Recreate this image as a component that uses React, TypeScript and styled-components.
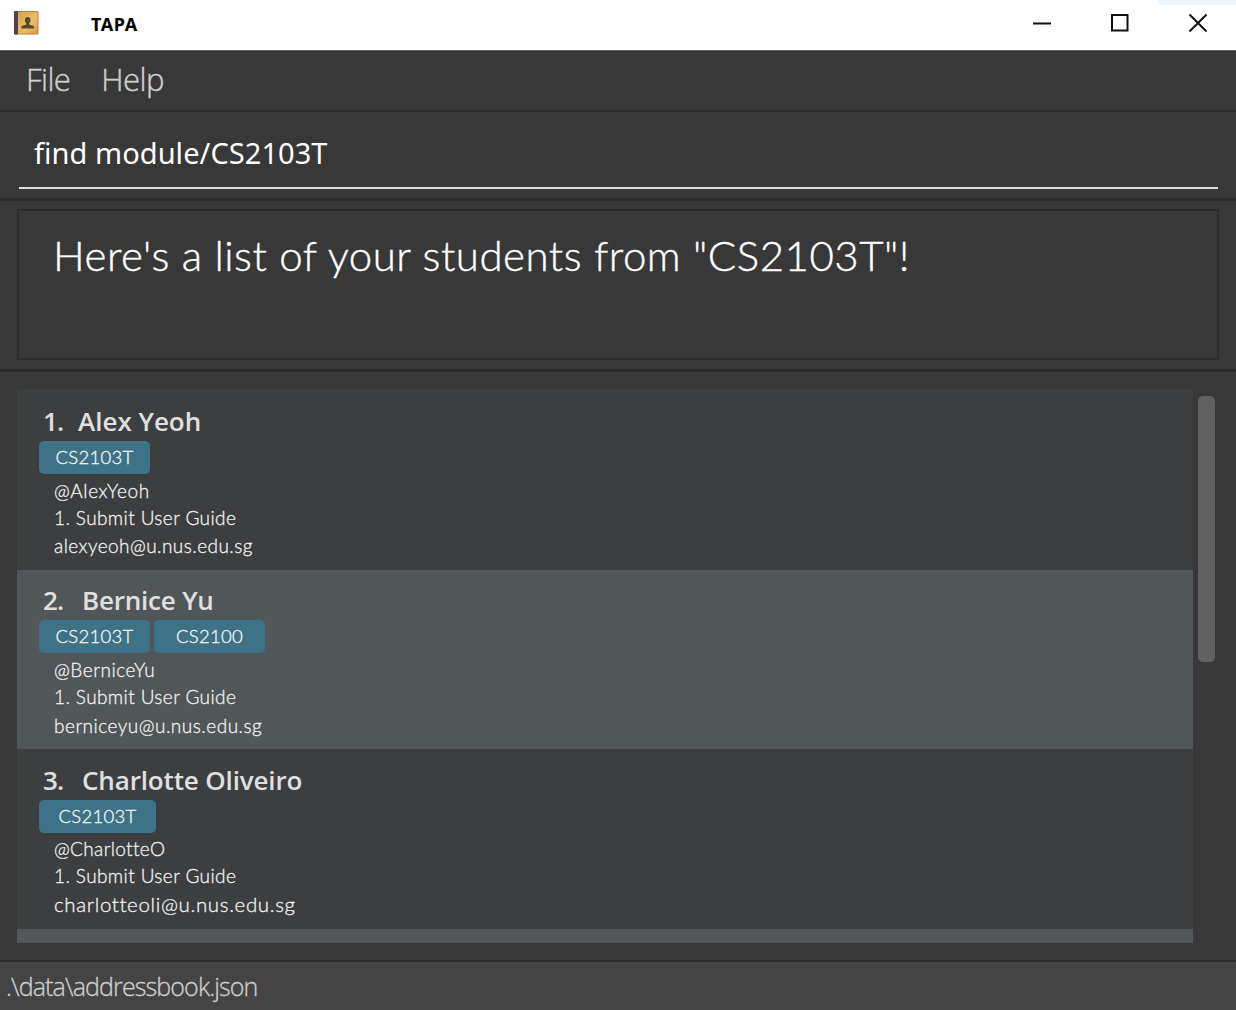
import React from "react";
import styled, { createGlobalStyle } from "styled-components";

const GlobalStyle = createGlobalStyle`
  * { box-sizing: border-box; }
  body { margin: 0; background: #383838; overflow: hidden; }
`;

const segoe = `"Open Sans", "Noto Sans", sans-serif`;
const avenir = `Lato, "Open Sans", sans-serif`;

const Window = styled.div`
  width: 1236px;
  height: 1010px;
  display: flex;
  flex-direction: column;
  background: #383838;
  overflow: hidden;
`;

const TitleBar = styled.header`
  height: 51px;
  flex: none;
  display: flex;
  align-items: flex-start;
  background: #fff;
  border-bottom: 1px solid #5e5e5e;
`;

const AppIcon = styled.svg`
  width: 26px;
  height: 26px;
  margin: 10px 0 0 13px;
`;

const Title = styled.h1`
  margin: 12px auto 0 52px;
  font: 700 18px/25px "Noto Sans", sans-serif;
  letter-spacing: 0.6px;
  color: #000;
`;

const WindowButton = styled.button<{ $lit?: boolean }>`
  width: 78px;
  height: 46px;
  padding: 0 0 0 1px;
  border: 0;
  border-top: ${(p) => (p.$lit ? "5px solid #f0f8fe" : "5px solid #fff")};
  background: none;
  display: flex;
  align-items: center;
  justify-content: center;

  svg {
    width: 20px;
    height: 20px;
    margin-bottom: 5px;
    fill: none;
    stroke: #111;
    stroke-width: 2;
  }
`;

const MenuBar = styled.nav`
  height: 61px;
  flex: none;
  display: flex;
  gap: 31px;
  padding: 7px 0 0 26px;
  border-bottom: 2px solid #2b2b2b;
`;

const MenuItem = styled.span<{ $tracking: number }>`
  font: 300 31px/43px ${segoe};
  letter-spacing: ${(p) => p.$tracking}px;
  color: #cfcfcf;
  -webkit-text-stroke: 0.4px #cfcfcf;
`;

const CommandBox = styled.section`
  height: 89px;
  flex: none;
  padding: 17px 18px 0 19px;
  border-bottom: 3px solid #2b2b2b;
`;

const CommandField = styled.div`
  height: 60px;
  padding: 3px 0 0 15px;
  border-bottom: 2px solid #dedede;
  font: 400 29px/42px "Noto Sans", sans-serif;
  letter-spacing: 0.05px;
  color: #fff;
`;

const ResultPane = styled.section`
  height: 171px;
  flex: none;
  padding: 8px 17px 9px;
  border-bottom: 3px solid #2b2b2b;
`;

const ResultBox = styled.div`
  height: 151px;
  padding: 18px 0 0 34px;
  border: 2px solid #2b2b2b;
  font: 300 42px/52px ${avenir};
  letter-spacing: 0.5px;
  white-space: nowrap;
  color: #fff;
  -webkit-text-stroke: 0.4px #fff;
`;

const ListPane = styled.main`
  height: 588px;
  flex: none;
  display: flex;
  gap: 5px;
  padding: 18px 0 17px 17px;
`;

const CardList = styled.div`
  width: 1176px;
  height: 553px;
  overflow: hidden;
`;

const Card = styled.article<{ $alt?: boolean }>`
  height: 179.6px;
  padding: 12.5px 0 0 22px;
  background: ${(p) => (p.$alt ? "#515658" : "#3c3e3f")};
`;

const NameRow = styled.h2`
  margin: 0;
  padding-left: 4px;
  height: 38.4px;
  display: flex;
  font: 600 26px/36px ${segoe};
  color: #e0e0e0;
`;

const Index = styled.span<{ $width: number }>`
  width: ${(p) => p.$width}px;
  letter-spacing: -1px;
`;

const Name = styled.span<{ $tracking: number }>`
  letter-spacing: ${(p) => p.$tracking}px;
`;

const TagRow = styled.div`
  display: flex;
  gap: 4px;
  height: 33px;
`;

const Tag = styled.span<{ $width: number }>`
  width: ${(p) => p.$width}px;
  border-radius: 5px;
  background: #3e7387;
  text-align: center;
  font: 300 18.5px/33px ${avenir};
  letter-spacing: 0.25px;
  color: #f2f6f8;
  -webkit-text-stroke: 0.3px #f2f6f8;
`;

const Details = styled.div<{ $top: number }>`
  padding-top: ${(p) => p.$top}px;
`;

const Detail = styled.div<{ $size?: number; $tracking?: number; $line?: number }>`
  height: ${(p) => p.$line ?? 27}px;
  padding-left: 15px;
  font: 300 ${(p) => p.$size ?? 19}px/27px ${avenir};
  letter-spacing: ${(p) => p.$tracking ?? 0.4}px;
  color: #f2f2f2;
  -webkit-text-stroke: 0.3px #f2f2f2;
`;

const ScrollThumb = styled.div`
  width: 17px;
  height: 266px;
  margin-top: 6px;
  border-radius: 5px;
  background: #616161;
`;

const StatusBar = styled.footer`
  flex: 1;
  border-top: 2px solid #2b2b2b;
  padding: 6px 0 0 6px;
  background: #444;
  font: 300 25px/36px ${segoe};
  letter-spacing: -0.87px;
  color: #cfcfcf;
  -webkit-text-stroke: 0.3px #cfcfcf;
`;

type Student = {
  name: string;
  indexWidth: number;
  tracking: number;
  tags: { label: string; width: number }[];
  handle: string;
  email: string;
  handleTracking: number;
  emailTracking: number;
  emailSize?: number;
  detailsTop: number;
  taskLine: number;
};

const students: Student[] = [
  {
    name: "Alex Yeoh", indexWidth: 35, tracking: 0,
    tags: [{ label: "CS2103T", width: 111 }],
    handle: "@AlexYeoh", email: "alexyeoh@u.nus.edu.sg",
    handleTracking: 0.6, emailTracking: 0.45, detailsTop: 3, taskLine: 28,
  },
  {
    name: "Bernice Yu", indexWidth: 39, tracking: -0.2,
    tags: [{ label: "CS2103T", width: 111 }, { label: "CS2100", width: 111 }],
    handle: "@BerniceYu", email: "berniceyu@u.nus.edu.sg",
    handleTracking: 0.55, emailTracking: 0.5, detailsTop: 3, taskLine: 29,
  },
  {
    name: "Charlotte Oliveiro", indexWidth: 39, tracking: -0.15,
    tags: [{ label: "CS2103T", width: 117 }],
    handle: "@CharlotteO", email: "charlotteoli@u.nus.edu.sg",
    handleTracking: 0.35, emailTracking: 0.65, emailSize: 20.5, detailsTop: 2, taskLine: 28.5,
  },
];

function BookIcon() {
  return (
    <AppIcon viewBox="0 0 26 26">
      <defs>
        <linearGradient id="cover" x1="0" y1="0" x2="1" y2="1">
          <stop offset="0" stopColor="#d6a04a" />
          <stop offset="0.6" stopColor="#ebbf6f" />
          <stop offset="1" stopColor="#d39a3c" />
        </linearGradient>
      </defs>
      <rect x="1" y="1" width="24.5" height="23.5" rx="1.5" fill="#b98335" />
      <rect x="5" y="2" width="19.5" height="21.5" fill="url(#cover)" />
      <rect x="1" y="1" width="4" height="23.5" rx="1" fill="#554147" />
      <ellipse cx="14.7" cy="10.2" rx="2.8" ry="3.2" fill="#59482c" />
      <path d="M13.2 11h3v3.6l3.9 1.2c.8.3 1 1 1 2.6H8.4c0-1.6.2-2.3 1-2.6l3.8-1.2z" fill="#59482c" />
    </AppIcon>
  );
}

export default function App() {
  return (
    <>
      <GlobalStyle />
      <Window>
        <TitleBar>
          <BookIcon />
          <Title>TAPA</Title>
          <WindowButton aria-label="Minimize">
            <svg viewBox="0 0 20 20"><path d="M1 10.5h18" /></svg>
          </WindowButton>
          <WindowButton aria-label="Maximize">
            <svg viewBox="0 0 20 20"><rect x="2" y="2" width="15.5" height="15.5" /></svg>
          </WindowButton>
          <WindowButton aria-label="Close" $lit>
            <svg viewBox="0 0 20 20"><path d="M1.5 1.5l17 17M18.5 1.5l-17 17" /></svg>
          </WindowButton>
        </TitleBar>
        <MenuBar>
          <MenuItem $tracking={-0.6}>File</MenuItem>
          <MenuItem $tracking={-0.5}>Help</MenuItem>
        </MenuBar>
        <CommandBox>
          <CommandField>find module/CS2103T</CommandField>
        </CommandBox>
        <ResultPane>
          <ResultBox>Here's a list of your students from "CS2103T"!</ResultBox>
        </ResultPane>
        <ListPane>
          <CardList>
            {students.map((s, i) => (
              <Card key={s.name} $alt={i % 2 === 1}>
                <NameRow>
                  <Index $width={s.indexWidth}>{i + 1}.</Index>
                  <Name $tracking={s.tracking}>{s.name}</Name>
                </NameRow>
                <TagRow>
                  {s.tags.map((t) => (
                    <Tag key={t.label} $width={t.width}>{t.label}</Tag>
                  ))}
                </TagRow>
                <Details $top={s.detailsTop}>
                  <Detail $tracking={s.handleTracking}>{s.handle}</Detail>
                  <Detail $line={s.taskLine}>1. Submit User Guide</Detail>
                  <Detail $tracking={s.emailTracking} $size={s.emailSize}>{s.email}</Detail>
                </Details>
              </Card>
            ))}
            <Card $alt />
          </CardList>
          <ScrollThumb />
        </ListPane>
        <StatusBar>.\data\addressbook.json</StatusBar>
      </Window>
    </>
  );
}
